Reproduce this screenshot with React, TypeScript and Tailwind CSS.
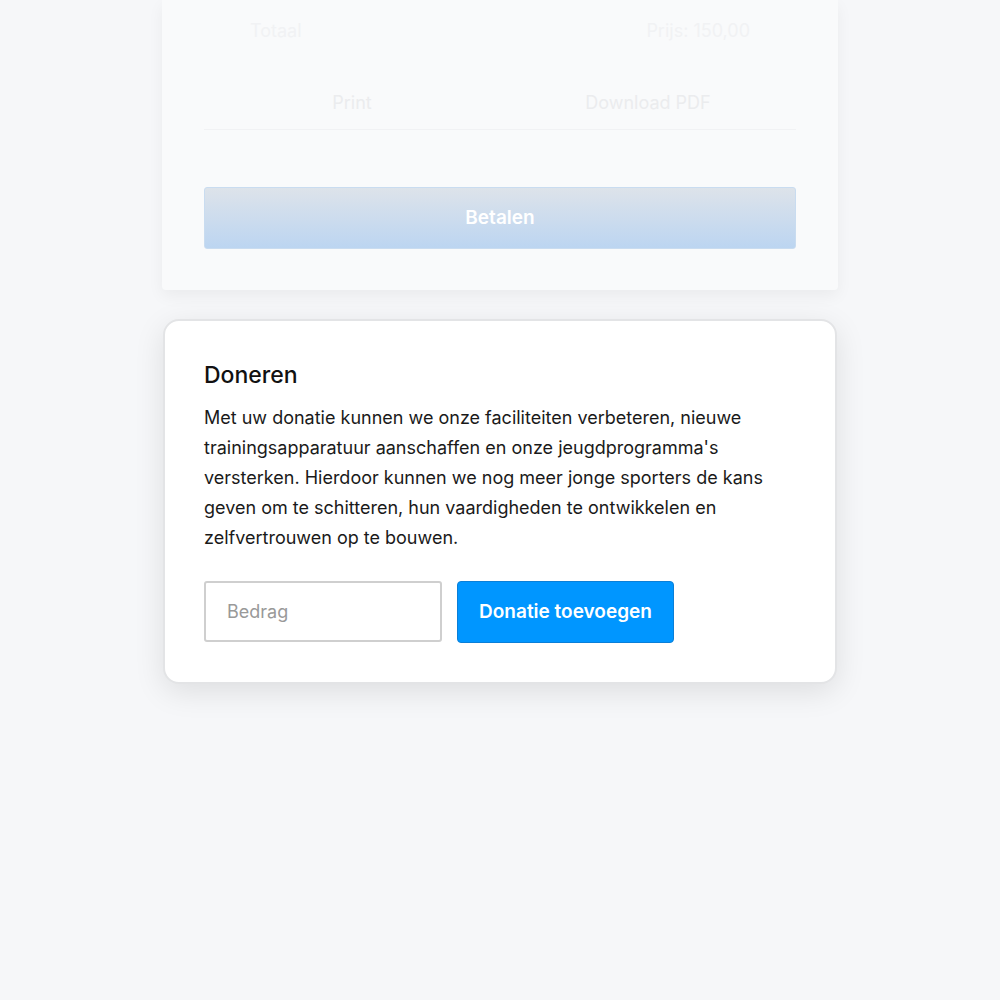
import React from "react";

export default function App() {
  return (
    <div
      className="min-h-[1000px] w-full bg-[#f6f7f9] flex flex-col items-center"
      style={{ fontFamily: "Inter, 'Noto Sans', 'Liberation Sans', sans-serif" }}
    >
      {/* faded previous card */}
      <div className="w-[676px] bg-[#f9fafb] rounded-b-[4px] shadow-[0_6px_16px_rgba(0,0,0,0.05)] px-[42px] pb-[41px] flex flex-col">
        <div className="h-[76px] pb-[16px] flex items-center justify-between px-[46px] text-[18px] text-[#f1f2f4]">
          <span>Totaal</span>
          <span>Prijs: 150,00</span>
        </div>
        <div className="h-[54px] grid grid-cols-2 border-b border-[#f1f2f4] text-[18px] text-[#ebecee]">
          <div className="flex items-center justify-center">Print</div>
          <div className="flex items-center justify-center">Download PDF</div>
        </div>
        <div className="h-[57px]" />
        <button className="h-[62px] w-full rounded-[3px] border border-[#c9dcf0] bg-gradient-to-b from-[#dde3ea] to-[#bcd5f1] text-white text-[19px] font-semibold">
          Betalen
        </button>
      </div>

      {/* donate card */}
      <div className="mt-[29px] w-[674px] rounded-[16px] border-2 border-[#e3e4e6] bg-white shadow-[0_8px_30px_rgba(0,0,0,0.10)] px-[39px] pt-[40px] pb-[39px]">
        <h2 className="text-[23px] leading-[28px] font-medium text-[#111]">Doneren</h2>
        <p className="mt-[14px] text-[18px] leading-[30px] text-[#1a1a1a]">
          Met uw donatie kunnen we onze faciliteiten verbeteren, nieuwe trainingsapparatuur aanschaffen en onze jeugdprogramma's versterken. Hierdoor kunnen we nog meer jonge sporters de kans geven om te schitteren, hun vaardigheden te ontwikkelen en zelfvertrouwen op te bouwen.
        </p>
        <div className="mt-[28px] flex gap-[15px]">
          <input
            placeholder="Bedrag"
            className="h-[61px] w-[238px] rounded-[3px] border-2 border-[#cfcfcf] px-[21px] text-[18px] text-[#333] placeholder:text-[#999] outline-none"
          />
          <button className="h-[62px] w-[217px] rounded-[4px] border border-[#0a7fd8] bg-[#0096ff] text-white text-[19px] font-semibold">
            Donatie toevoegen
          </button>
        </div>
      </div>
    </div>
  );
}
